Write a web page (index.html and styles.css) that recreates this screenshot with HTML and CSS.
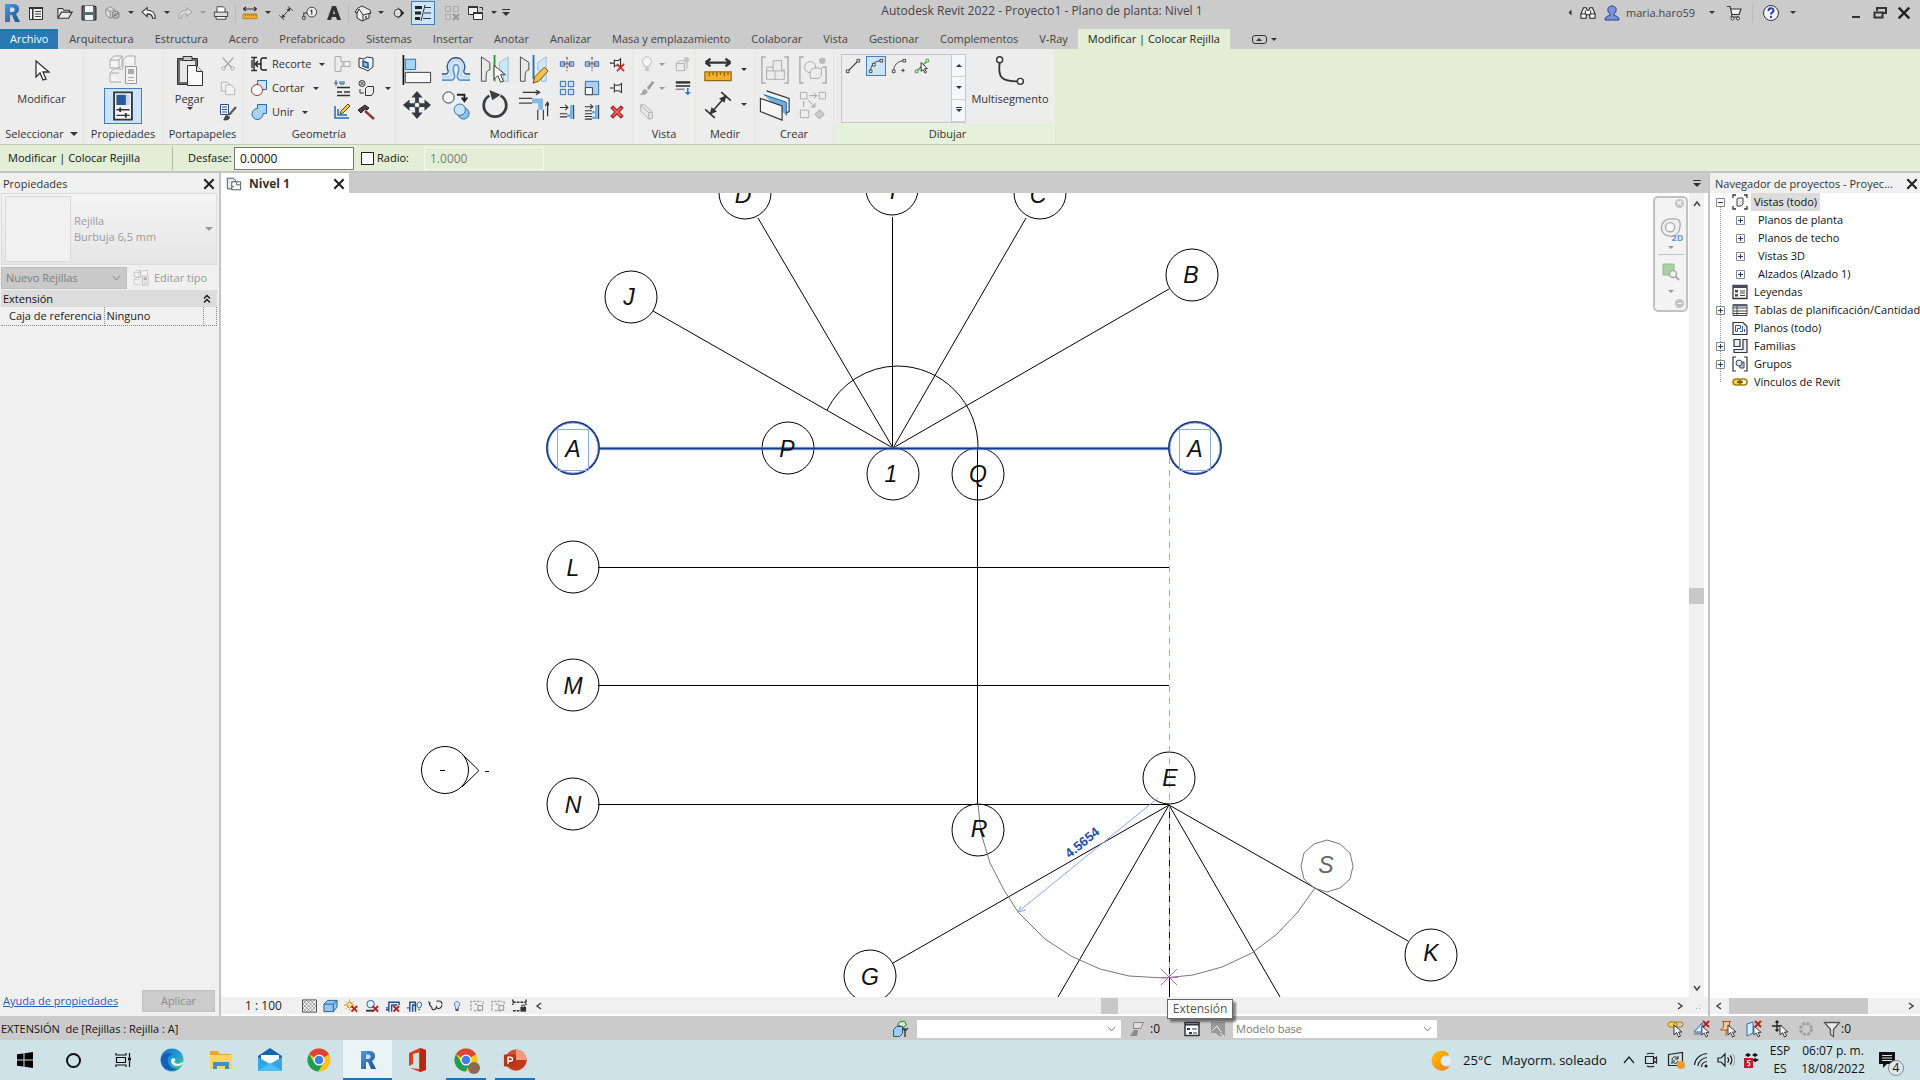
FILE: index.html
```html
<!DOCTYPE html>
<html lang="es">
<head>
<meta charset="utf-8">
<title>Autodesk Revit 2022 - Proyecto1</title>
<link rel="stylesheet" href="styles.css">
</head>
<body>
<svg class="sprite" aria-hidden="true">
  <defs>
    <linearGradient id="gBlue" x1="0" y1="0" x2="1" y2="1"><stop offset="0" stop-color="#4f9be0"/><stop offset="1" stop-color="#1c4f90"/></linearGradient>
    <linearGradient id="gEdge" x1="0" y1="0" x2="1" y2="1"><stop offset="0" stop-color="#1b6fc0"/><stop offset=".5" stop-color="#1f9bd8"/><stop offset="1" stop-color="#5fd06a"/></linearGradient>
    <linearGradient id="gSun" x1="0" y1="0" x2="1" y2="1"><stop offset="0" stop-color="#ffc400"/><stop offset="1" stop-color="#f07c10"/></linearGradient>
  </defs>
  <symbol id="revit" viewBox="0 0 20 20"><path d="M3 1h8c4 0 6 2 6 5 0 2-1 4-3 5l4 8h-5l-3-7H8v7H3z" fill="url(#gBlue)"/><path d="M8 4.500v4.500h2.500c3 0 3-4.500 0-4.500z" fill="#c9dff2"/></symbol>
  <symbol id="cursor" viewBox="0 0 16 22"><path d="M2 1v16l4-4 3 7 3-1-3-7h6z" fill="#fff" stroke="#333" stroke-width="1.300"/></symbol>
  <symbol id="palette" viewBox="0 0 16 16"><path d="M1.500 2.500h13v12h-13z" fill="#f4f4f4" stroke="#333"/><path d="M1 2h14v2H1zM4 4h1.500v10H4z" fill="#333"/><path d="M7 6.500h6M7 9h6M7 11.500h6" stroke="#444"/></symbol>
  <symbol id="open" viewBox="0 0 18 16"><path d="M1 14V3h5l2 2h6v3M1 14L5 7h12l-4 7z" fill="#e8e8e8" stroke="#333" stroke-width="1.200"/></symbol>
  <symbol id="save" viewBox="0 0 16 16"><path d="M1 1h13l1 1v13H1z" fill="#5a6672" stroke="#222"/><path d="M4 1h8v6H4zM4 10h8v5H4z" fill="#f1f3f5"/></symbol>
  <symbol id="sync" viewBox="0 0 18 16"><path d="M1 4l5-3 5 3v6l-5 4-5-4zM1 4l5 3 5-3M6 7v7" fill="#ddd" stroke="#888"/><circle cx="12" cy="10" r="4.500" fill="#8c8c8c"/><path d="M9.500 10a2.500 2.500 0 0 1 4-2M14.500 10a2.500 2.500 0 0 1-4 2" stroke="#eee" fill="none"/></symbol>
  <symbol id="undo" viewBox="0 0 18 16"><path d="M1 7l6-5v3c6 0 9 2 9 9h-3c0-4-2-5-6-5v3z" fill="#f4f4f4" stroke="#333" stroke-width="1.200"/></symbol>
  <symbol id="redo" viewBox="0 0 18 16"><path d="M17 7l-6-5v3c-6 0-9 2-9 9h3c0-4 2-5 6-5v3z" fill="#d8d8d8" stroke="#999"/></symbol>
  <symbol id="print" viewBox="0 0 18 16"><path d="M4.500 7V1h7l2 2v4" fill="#fff" stroke="#333"/><path d="M1.500 7h15v5h-15z" fill="#ddd" stroke="#333"/><path d="M3.500 12h11v3h-11z" fill="#fff" stroke="#333"/></symbol>
  <symbol id="measure" viewBox="0 0 24 22"><path d="M2 5h20M2 5l4-3M2 5l4 3M22 5l-4-3M22 5l-4 3" stroke="#333" stroke-width="1.800"/><path d="M1.500 12.500h21v7h-21z" fill="#f5b12e" stroke="#9a6a10"/><path d="M5 13v3M8 13v2M11 13v3M14 13v2M17 13v3M20 13v2" stroke="#8a5a00"/></symbol>
  <symbol id="dim" viewBox="0 0 26 28"><path d="M6 22L20 6M1 18l9 8M16 2l9 8" stroke="#333" stroke-width="1.500"/><path d="M5 23l2-7 5 4zM21 5l-7 3 5 4z" fill="#333"/></symbol>
  <symbol id="tag" viewBox="0 0 18 16"><circle cx="11" cy="7" r="5.500" fill="#eee" stroke="#333"/><path d="M6 8H2v4M11 4.500V10M11 4.500L9.500 6" fill="none" stroke="#333" stroke-width="1.200"/><path d="M.5 12h3v3h-3z" fill="#eee" stroke="#333"/></symbol>
  <symbol id="letterA" viewBox="0 0 16 16"><path d="M6 1h4l5 14h-4l-1-3H6l-1 3H1z" fill="#333"/><path d="M7 9h2L8 5z" fill="#ccc"/></symbol>
  <symbol id="house" viewBox="0 0 18 18"><path d="M1 8l3-4 4-2 8 4 1 3-2 .5V14l-7 3-5-3V9z" fill="#eee" stroke="#333"/><path d="M1 8l2 1 2-4 4 6 8-2M9 11v6" stroke="#333" fill="none"/><path d="M11 12l2-.6v4l-2 .8z" fill="#777"/></symbol>
  <symbol id="section" viewBox="0 0 16 18"><circle cx="7" cy="9" r="4.500" fill="#ddd" stroke="#333"/><path d="M6 2l8 7-8 7 2-3a5 5 0 0 0 0-8z" fill="#222"/></symbol>
  <symbol id="thin" viewBox="0 0 18 16"><path d="M1 2.500h7M1 8h6M1 13.500h5" stroke="#222" stroke-width="3"/><path d="M10.500 2.500H17M10 8h7M9 13.500h8M11 0L7 16" stroke="#333"/></symbol>
  <symbol id="closehid" viewBox="0 0 16 16"><path d="M1.500 1.500h5v5h-5zM9.500 1.500h5v5h-5zM1.500 9.500h5v5h-5z" fill="none" stroke="#aaa"/><path d="M9 9l6 6M15 9l-6 6" stroke="#999" stroke-width="2"/></symbol>
  <symbol id="switch" viewBox="0 0 18 18"><path d="M1.500 2.500h9v8h-9z" fill="#eee" stroke="#333"/><path d="M6.500 8.500h9v7h-9z" fill="#fff" stroke="#333"/><path d="M6 8h10v2H6zM1 2h10v2H1z" fill="#333"/><path d="M12.500 3.500h3v3" fill="none" stroke="#333"/></symbol>
  <symbol id="binoc" viewBox="0 0 18 16"><path d="M1 14V9l3-7h3l1 3h2l1-3h3l3 7v5h-6v-4H7v4z" fill="#f3f3f3" stroke="#222" stroke-width="1.200"/><path d="M1 9h6M11 9h6M6 5v5M12 5v5" stroke="#222"/></symbol>
  <symbol id="user" viewBox="0 0 16 16"><path d="M1 15c0-3 2-4 5-4.500V9C2 5 4 1 8 1s6 4 2 8v1.500c3 .5 5 1.500 5 4.500z" fill="#7c93dc" stroke="#2b3c7c"/></symbol>
  <symbol id="cart" viewBox="0 0 16 16"><path d="M1 1.500h3l2 8h7l2-5.500H5" fill="#f3f3f3" stroke="#333" stroke-width="1.200"/><path d="M6 9.500l-1 2.500h8" fill="none" stroke="#333"/><circle cx="6.500" cy="13.500" r="1.500" fill="#fff" stroke="#333"/><circle cx="12" cy="13.500" r="1.500" fill="#fff" stroke="#333"/></symbol>
  <symbol id="help" viewBox="0 0 18 18"><circle cx="9" cy="9" r="7.500" fill="#f4f6ff" stroke="#333"/><path d="M6.500 7c0-3.500 5-3.500 5-.5 0 2-2.500 1.800-2.500 4" fill="none" stroke="#2446b8" stroke-width="2"/><circle cx="9" cy="13" r="1.200" fill="#2446b8"/></symbol>
  <symbol id="restore" viewBox="0 0 14 14"><path d="M4 5V2h9v5h-3" fill="none" stroke="#333" stroke-width="2"/><path d="M1.500 6.500h8v5h-8z" fill="none" stroke="#333" stroke-width="2"/></symbol>
  <symbol id="x" viewBox="0 0 12 12"><path d="M2 2l8 8M10 2l-8 8" stroke="#222" stroke-width="1.800"/></symbol>
  <symbol id="types" viewBox="0 0 30 30"><path d="M2 5l4-4h8v9l-3 3H2zM2 5h9v8M11 5l3-4M15 5l4-4h8v9M15 5v8M2 18l4-4h9M2 18v9h11M2 18h9" fill="#f4f4f4" stroke="#aaa"/><path d="M17.500 11.500h11v17h-11z" fill="#f2f2f2" stroke="#999"/><path d="M20 14h6v5h-6zM20 22h6v1h-6zM20 25h6v1h-6z" fill="#aaa"/></symbol>
  <symbol id="props" viewBox="0 0 22 32"><path d="M1.500 1.500h19v29h-19z" fill="#f6f6f6" stroke="#2d3540" stroke-width="2"/><path d="M4 4h14v11H4z" fill="#c6d8ea"/><path d="M4 4h10v11H4z" fill="#2a5b98"/><path d="M4 20h14M4 26h14" stroke="#333" stroke-width="1.500"/><path d="M8 17.500v5M14 23.500v5" stroke="#333" stroke-width="2"/></symbol>
  <symbol id="clip" viewBox="0 0 28 32"><path d="M1.500 3.500h20v26h-20z" fill="#6b6b6b" stroke="#333"/><path d="M4 6h15v21H4z" fill="#e8e8e8"/><path d="M7 1.500h9v4H7z" fill="#ccc" stroke="#333"/><path d="M11.500 10.500h9l6 6v14h-15z" fill="#fafafa" stroke="#333"/><path d="M20.500 10.500v6h6" fill="#ddd" stroke="#333"/></symbol>
  <symbol id="cut" viewBox="0 0 18 18"><path d="M3 2l10 11M15 2L5 13" stroke="#aaa" stroke-width="1.500"/><circle cx="4" cy="14" r="2" fill="none" stroke="#aaa"/><circle cx="14" cy="14" r="2" fill="none" stroke="#aaa"/></symbol>
  <symbol id="copyg" viewBox="0 0 18 18"><path d="M1.500 2.500h7l2 2v8h-9z" fill="#f0f0f0" stroke="#b0b0b0"/><path d="M6.500 5.500h6l4 4v7h-10z" fill="#f3f3f3" stroke="#b0b0b0"/></symbol>
  <symbol id="match" viewBox="0 0 18 18"><path d="M1.500 1.500h8v10h-8z" fill="#f6fafe" stroke="#2a4f86"/><path d="M3 4h5M3 6.500h5M3 9h5" stroke="#2a4f86"/><path d="M17 4l-7 8" stroke="#555" stroke-width="2"/><path d="M4 17c2-1 1-5 4-5l3 2c0 3-4 4-7 3z" fill="#444"/></symbol>
  <symbol id="cope" viewBox="0 0 18 18"><path d="M1 2.500h6M1 15.500h6M4 2v13M2 5v8" stroke="#333" stroke-width="1.500"/><path d="M17 3h-4c-3 0-2 3-2 6s-1 6 2 6h4M5 9h6M8 6L5 9l3 3" fill="none" stroke="#222" stroke-width="1.500"/></symbol>
  <symbol id="cutg" viewBox="0 0 18 18"><path d="M7.500 1.500h9v9h-9z" fill="#cfe6f8" stroke="#2c6ca8"/><circle cx="7" cy="11" r="5.500" fill="#fff" stroke="#a33"/></symbol>
  <symbol id="join" viewBox="0 0 18 18"><path d="M7.500 1.500h9v9H13a5.500 5.500 0 1 1-5.500-5z" fill="#a8d3f2" stroke="#2c6ca8"/></symbol>
  <symbol id="wallj" viewBox="0 0 18 18"><path d="M2 1.500h6v5h2v5H8v5H2z" fill="#ececec" stroke="#aaa"/><path d="M11 6.500h6v5h-6z" fill="#f3f3f3" stroke="#aaa"/></symbol>
  <symbol id="split" viewBox="0 0 18 18"><path d="M4 8.500h13M4 13h5M11 13h6M4 16.500h13" stroke="#333" stroke-width="1.500"/><path d="M3 1v6M1 4h4M7 2v3h4V2M9 2v3" stroke="#2c5ca0" fill="none"/></symbol>
  <symbol id="paintw" viewBox="0 0 18 18"><path d="M2 3v12h14M5 6v6h9" fill="none" stroke="#1f6db0" stroke-width="1.500"/><path d="M7 11l1-3 7-7 2 2-7 7z" fill="#f3c24a" stroke="#6a4c10"/></symbol>
  <symbol id="face" viewBox="0 0 18 18"><path d="M2 3l5 1 3-2 6 1v9l-5 4-4-2-5-2z" fill="#f2f2f2" stroke="#333"/><path d="M6 6l5 2v5l-5-2z" fill="#8fc4ea" stroke="#205a90" stroke-width="1.500"/></symbol>
  <symbol id="demol" viewBox="0 0 18 18"><circle cx="5" cy="4.500" r="3" fill="#ddd" stroke="#444"/><path d="M3 2.500l4 4M7 2.500l-4 4" stroke="#444"/><path d="M8.500 9.500l2-2h6v6l-2 3h-6z" fill="#eee" stroke="#333"/><path d="M3 10v4h4" stroke="#333" fill="none"/></symbol>
  <symbol id="hammer" viewBox="0 0 18 18"><path d="M1 7l7-5 4 3-2 2-2-1-4 4z" fill="#444" stroke="#222"/><path d="M8 8l9 8" stroke="#8a3a2c" stroke-width="2.500"/></symbol>
  <symbol id="align" viewBox="0 0 32 32"><path d="M1.500 0v32" stroke="#111" stroke-width="1.800"/><path d="M3.500 4.500h11v11h-11z" fill="#a6d4f5" stroke="#2c6ca8"/><path d="M3.500 18.500h27v11h-27z" fill="#f7f7f7" stroke="#333"/></symbol>
  <symbol id="offset" viewBox="0 0 34 30"><path d="M1 26.500h11.500c6.500-3 0-9 1.500-14.500 1-4 5-4 6 0 1.500 5.500-5 11.500 1.500 14.500H33" fill="none" stroke="#5b9bd0" stroke-width="2"/><path d="M1 23h8c6-2 0-6 1-12 1-9 13-9 14 0 1 6-5 10 1 12h8" fill="none" stroke="#bcdcf4" stroke-width="3"/><path d="M1 19.500h5c5-2 0-5 1-9C9-2 25-2 27 10.500c1 4-4 7 1 9h5" fill="none" stroke="#2c5080" stroke-width="1.500"/></symbol>
  <symbol id="mirrorpick" viewBox="0 0 32 32"><path d="M1.500 2l9 6v8c-4 0-4 4-4 12h-5z" fill="#e8e8e8" stroke="#444"/><path d="M30 2l-9 6v8c4 0 4 4 4 12h5z" fill="#cfe8f8" stroke="#9bc"/><path d="M15.500 0v28" stroke="#2d9b37" stroke-width="2"/><path d="M15 11v15l4-4 3 7 3-1-3-7h5z" fill="#fff" stroke="#333"/></symbol>
  <symbol id="mirrordraw" viewBox="0 0 32 32"><path d="M1.500 2l9 6v8c-4 0-4 4-4 12h-5z" fill="#e8e8e8" stroke="#444"/><path d="M29 2l-9 6v8c4 0 4 4 4 12h5z" fill="#cfe8f8" stroke="#9bc"/><path d="M15.500 0v26" stroke="#2c6ec4" stroke-width="2"/><path d="M15 30l2-7 10-10 4 4-10 11z" fill="#f3c24a" stroke="#6b4c10"/></symbol>
  <symbol id="move" viewBox="0 0 32 32"><path d="M16 1l6 7h-4v5h-4V8h-4zM16 31l6-7h-4v-5h-4v5h-4zM1 16l7-6v4h5v4H8v4zM31 16l-7-6v4h-5v4h5v4z" fill="#333a44"/><path d="M13.500 13.500h5v5h-5z" fill="#fff" stroke="#333"/></symbol>
  <symbol id="copy" viewBox="0 0 32 32"><circle cx="8" cy="8" r="6" fill="#f6f6f6" stroke="#333"/><path d="M17 5h8v6M22 8l3 4 3-4" fill="none" stroke="#222" stroke-width="2"/><circle cx="24" cy="25" r="6" fill="#8ec4ea" stroke="#2c6ca8"/><circle cx="20" cy="21" r="6" fill="#c8e4f8" stroke="#2c6ca8"/></symbol>
  <symbol id="rotate" viewBox="0 0 32 32"><path d="M22 6A12 12 0 1 1 10 6" fill="none" stroke="#3a3f46" stroke-width="3"/><path d="M10 0l12 5-9 6z" fill="#3a3f46"/></symbol>
  <symbol id="trim" viewBox="0 0 32 32"><path d="M4 2.500h17M18 0l4 2.500L18 5M30.500 28V13M28 17l2.500-4 2 4" fill="none" stroke="#333" stroke-width="1.300"/><path d="M0 9h14M0 14h14M20 32V21M26 32V21" stroke="#444" stroke-width="1.300"/><path d="M14 11.500h9V21" fill="none" stroke="#7fbbe6" stroke-width="5"/></symbol>
  <symbol id="splitel" viewBox="0 0 18 18"><path d="M1.500 6.500h5v5h-5zM11.500 6.500h5v5h-5z" fill="#a8d3f2" stroke="#2560a0"/><path d="M9 1v16" stroke="#222" stroke-dasharray="3 2"/><path d="M4 9h10" stroke="#a33"/></symbol>
  <symbol id="unpin" viewBox="0 0 18 18"><path d="M1 8h5M6 4v9M6 5h5l2-2v10l-2-2H6" fill="none" stroke="#333" stroke-width="1.200"/><path d="M9 9l8 8M17 9l-8 8" stroke="#c5332a" stroke-width="2"/></symbol>
  <symbol id="pin" viewBox="0 0 18 18"><path d="M1 9h5M6 4v10M6 6h5l3-2v10l-3-2H6" fill="none" stroke="#333" stroke-width="1.200"/></symbol>
  <symbol id="array" viewBox="0 0 18 18"><path d="M1.500 1.500h6v6h-6zM10.500 1.500h6v6h-6zM1.500 10.500h6v6h-6zM10.500 10.500h6v6h-6z" fill="#cfe6f8" stroke="#2560a0"/></symbol>
  <symbol id="scale" viewBox="0 0 18 18"><path d="M1.500 1.500h15v15h-15z" fill="#a8d3f2" stroke="#2560a0"/><path d="M1.500 8.500h8v8h-8z" fill="#f7f7f7" stroke="#333"/></symbol>
  <symbol id="trim1" viewBox="0 0 18 18"><path d="M1 4h9M7 1l3 3-3 3M1 11h8M1 14.500h8M16.500 1v16" stroke="#333" fill="none" stroke-width="1.200"/><path d="M14 1v16M9 13h4" stroke="#6fb0e0" stroke-width="3"/></symbol>
  <symbol id="trim2" viewBox="0 0 18 18"><path d="M1 3h9M7 .5L10 3 7 5.500M1 7.500h8M1 11h8M1 14h8M1 17h8M16.500 1v16" stroke="#333" fill="none" stroke-width="1.200"/><path d="M14 1v16M9 9.300h4M9 15.500h4" stroke="#6fb0e0" stroke-width="3"/></symbol>
  <symbol id="redx" viewBox="0 0 18 18"><path d="M3 3l12 12M15 3L3 15" stroke="#a81f1f" stroke-width="4.500"/><path d="M4 4l10 10M14 4L4 14" stroke="#e8625c" stroke-width="2"/></symbol>
  <symbol id="bulb" viewBox="0 0 18 18"><path d="M6 12c0-3-2-3-2-6a5 5 0 0 1 10 0c0 3-2 3-2 6z" fill="#f4f4f4" stroke="#b5b5b5"/><path d="M7 13h4v4H7z" fill="#c4c4c4"/></symbol>
  <symbol id="boxg" viewBox="0 0 18 18"><path d="M1.500 8.500l3-3h9v8l-3 3h-9zM1.500 8.500h9v8M10.500 8.500l3-3" fill="#eee" stroke="#aaa"/><circle cx="13" cy="4" r="3" fill="#c4c4c4"/></symbol>
  <symbol id="brushg" viewBox="0 0 18 18"><path d="M16 2l-6 8" stroke="#999" stroke-width="3"/><path d="M1 16c3 0 2-6 6-6l3 3c-1 4-6 5-9 3z" fill="#aaa"/></symbol>
  <symbol id="linew" viewBox="0 0 20 18"><path d="M1 2h18" stroke="#333" stroke-width="3"/><path d="M1 6.500h18" stroke="#333" stroke-width="2"/><path d="M1 10.500h11" stroke="#333"/><path d="M15 9v5h-3l4 4 4-4h-3V9z" fill="#2c7cc8"/></symbol>
  <symbol id="wedge" viewBox="0 0 18 18"><path d="M2 1l3-1 10 9v7l-4 1-9-9zM2 1l9 9v7M11 10l4-1" fill="#e6e6e6" stroke="#aaa"/></symbol>
  <symbol id="group" viewBox="0 0 30 30"><path d="M5 1H1v28h4M25 1h4v28h-4" fill="none" stroke="#aaa" stroke-width="1.500"/><path d="M6 12h7V5h9v10h3v10H6zM6 16h9v9M13 12v4M15 16h10" fill="#ececec" stroke="#aaa"/></symbol>
  <symbol id="group2" viewBox="0 0 30 30"><path d="M5 1H1v28h4M25 12h4v17h-4" fill="none" stroke="#aaa" stroke-width="1.500"/><circle cx="12" cy="12" r="6" fill="#eee" stroke="#aaa"/><path d="M12 16l3-3h9v8l-3 3h-9z" fill="#ececec" stroke="#aaa"/><circle cx="25" cy="5" r="3.500" fill="#bbb"/></symbol>
  <symbol id="levels" viewBox="0 0 34 34"><path d="M8 2l24 8v14l-4 2" fill="#eaf4fb" stroke="#333" stroke-width="1.200"/><path d="M5 6l24 8v14" fill="#6fb0e0" stroke="#205a90"/><path d="M1.500 10l23 8v15l-23-9z" fill="#f5f5f5" stroke="#333" stroke-width="1.200"/></symbol>
  <symbol id="assembly" viewBox="0 0 30 30"><path d="M1.500 1.500h7v7h-7zM21.500 1.500h7v7h-7zM1.500 20.500h9v8h-9z" fill="#eee" stroke="#aaa"/><path d="M22 20l5 5-5 5-5-5z" fill="#ccc" stroke="#aaa"/><path d="M11 5h8M16 2l3 3-3 3M5 11v6M10 10l7 7M17 13v4h-4" fill="none" stroke="#999"/></symbol>
  <symbol id="dline" viewBox="0 0 18 18"><path d="M3 15L15 3" stroke="#333" stroke-width="1.200"/><path d="M1.500 13.500h3v3h-3zM13.500 1.500h3v3h-3z" fill="#fff" stroke="#333"/></symbol>
  <symbol id="darc" viewBox="0 0 18 18"><path d="M3 14C3 8 8 3 15 3" fill="none" stroke="#333"/><path d="M1.500 13.500h3v3h-3zM13.500 1.500h3v3h-3zM5 6h3v3H5z" fill="#fff" stroke="#333"/></symbol>
  <symbol id="darc2" viewBox="0 0 18 18"><path d="M3 14C3 8 8 3 15 3" fill="none" stroke="#333"/><path d="M1.500 13.500h3v3h-3zM13.500 1.500h3v3h-3z" fill="#fff" stroke="#333"/><path d="M13.500 12v4M11.500 14h4" stroke="#333"/></symbol>
  <symbol id="dpick" viewBox="0 0 18 18"><path d="M3 15L15 3" stroke="#3aa03a" stroke-width="1.500"/><path d="M1.500 13.500h3v3h-3zM13.500 1.500h3v3h-3z" fill="#dfd" stroke="#3aa03a"/><path d="M8 5v10l2.500-2 2 4 1.500-1-2-4h3z" fill="#fff" stroke="#222"/></symbol>
  <symbol id="multi" viewBox="0 0 32 34"><path d="M5 8c-2 16 2 20 19 20" fill="none" stroke="#333" stroke-width="2"/><circle cx="5" cy="5" r="3.200" fill="#fff" stroke="#333" stroke-width="1.500"/><circle cx="27" cy="28" r="3.200" fill="#fff" stroke="#333" stroke-width="1.500"/></symbol>
  <symbol id="plan" viewBox="0 0 18 16"><path d="M1.500 1.500h7l2 2v10h-9z" fill="#e4ecf4" stroke="#444"/><path d="M6.500 5.500h10v9h-10z" fill="#fff" stroke="#444"/><path d="M12 6v3h4M7 11h2" fill="none" stroke="#444"/></symbol>
  <symbol id="plus" viewBox="0 0 9 9"><path d="M.5.500h8v8h-8z" fill="#fff" stroke="#888"/><path d="M2 4.500h5M4.500 2v5" stroke="#223a7a"/></symbol>
  <symbol id="minus" viewBox="0 0 9 9"><path d="M.5.500h8v8h-8z" fill="#fff" stroke="#888"/><path d="M2 4.500h5" stroke="#223a7a"/></symbol>
  <symbol id="tviews" viewBox="0 0 16 16"><path d="M4 1H1v3M12 1h3v3M4 15H1v-3M12 15h3v-3" fill="none" stroke="#333" stroke-width="1.300"/><path d="M5 5l2-1h4v6l-2 2H5z" fill="#eee" stroke="#444"/></symbol>
  <symbol id="tleg" viewBox="0 0 16 16"><path d="M1 1.500h14v13H1z" fill="#fff" stroke="#333" stroke-width="1.300"/><path d="M1 1h14v3H1zM3 6h3v2.500H3zM3 10h3v2.500H3z" fill="#444b60"/><path d="M8 7h5M8 9h5M8 11.500h5" stroke="#444"/></symbol>
  <symbol id="ttab" viewBox="0 0 16 16"><path d="M1 2.500h14v11H1zM1 6h14M1 9h14M1 11.500h14M5 3v10" fill="#fff" stroke="#444"/><path d="M1 2h14v2.500H1z" fill="#555c70"/></symbol>
  <symbol id="tsheet" viewBox="0 0 16 16"><path d="M1 2.500h10l4 4v8H1z" fill="#fff" stroke="#334" stroke-width="1.200"/><path d="M3.500 5.500h5v3h-3v3h-2zM10.500 6v5.500H8M12.500 9v3" fill="none" stroke="#2c5ca0"/></symbol>
  <symbol id="tfam" viewBox="0 0 16 16"><path d="M2 1.500h6v7H2zM11 1.500h4v13H2v-3h9z" fill="#eee" stroke="#334" stroke-width="1.200"/></symbol>
  <symbol id="tgroup" viewBox="0 0 16 16"><path d="M4 1H1v14h3M12 1h3v14h-3" fill="none" stroke="#333" stroke-width="1.200"/><path d="M7 6h5v6H8z" fill="#b8c4d8" stroke="#445"/><circle cx="7" cy="7" r="3" fill="#dde6f0" stroke="#445"/></symbol>
  <symbol id="tlink" viewBox="0 0 16 10"><rect x="1" y="2" width="8" height="6" rx="3" fill="#f7d35a" stroke="#a67c00" stroke-width="1.500"/><rect x="7" y="2" width="8" height="6" rx="3" fill="none" stroke="#a67c00" stroke-width="1.500"/><path d="M5 5h6" stroke="#6b4e00" stroke-width="1.500"/></symbol>
  <symbol id="hatch" viewBox="0 0 16 14"><path d="M.5.500h15v13H.5z" fill="#fff" stroke="#444"/><path d="M1 5l4-4M1 9l8-8M1 13L13 1M5 13L15 3M9 13l6-6M1 9l4 4M1 5l8 8M1 1l12 12M5 1l10 10M9 1l6 6" stroke="#666" stroke-width=".7"/></symbol>
  <symbol id="vstyle" viewBox="0 0 16 14"><path d="M1 5l4-4h10v7l-4 5H1z" fill="#8fc8ee" stroke="#1f5c98"/><path d="M1 5h10v8M11 5l4-4" fill="none" stroke="#1f5c98"/></symbol>
  <symbol id="sunx" viewBox="0 0 16 14"><circle cx="6" cy="6" r="3" fill="#ffe28a" stroke="#c58a10"/><path d="M6 0v2M6 10v2M0 6h2M10 6h1M2 2l1 1M10 2L9 3M2 10l1-1" stroke="#c58a10"/><path d="M8 7l6 6M14 7l-6 6" stroke="#b82020" stroke-width="2"/></symbol>
  <symbol id="shadx" viewBox="0 0 16 14"><circle cx="6" cy="5" r="4" fill="#dff0fb" stroke="#2c5c98"/><path d="M1 12h8" stroke="#333" stroke-width="2"/><path d="M8 7l6 6M14 7l-6 6" stroke="#b82020" stroke-width="2"/></symbol>
  <symbol id="cropx" viewBox="0 0 16 14"><path d="M0 9h2M3 13V3h11v3M6 13V6h6M0 11h3" fill="none" stroke="#1f4f90" stroke-width="1.500"/><path d="M8 7l6 6M14 7l-6 6" stroke="#b82020" stroke-width="2"/></symbol>
  <symbol id="cropb" viewBox="0 0 16 14"><path d="M0 9h2M3 13V3h6v10M6 13V6h3" fill="none" stroke="#1f4f90" stroke-width="1.500"/><path d="M12 9c-3-4 0-7 2-6 3 1 1 5 0 6zM12 11h2" fill="#dff0fb" stroke="#1f4f90"/></symbol>
  <symbol id="glasses" viewBox="0 0 16 14"><path d="M1 2c0 3 1 5 3 6M1 4h2M9 2c3-1 6 0 6 3M4 8c0 4 4 4 5 0 1 3 5 2 6-2" fill="none" stroke="#333" stroke-width="1.200"/></symbol>
  <symbol id="sbulb" viewBox="0 0 16 14"><path d="M6 8C3 5 5 1 8 1s5 4 2 7v3H6z" fill="#cfe8fa" stroke="#2c62a8"/><path d="M6 12.500h4" stroke="#333" stroke-width="2"/></symbol>
  <symbol id="gbox" viewBox="0 0 16 14"><path d="M1 12V2h11M4 12h8M5 5h4M14 2v3" fill="none" stroke="#888" stroke-dasharray="3 1"/><path d="M8.500 6.500h5v5h-5z" fill="#eee" stroke="#888"/></symbol>
  <symbol id="constr" viewBox="0 0 16 14"><path d="M1 3h14M1 0v6M15 0v6M1 12h7" stroke="#333" stroke-width="1.500" fill="none" stroke-dasharray="3 1"/><path d="M9 8h6v5H9z" fill="#333"/><path d="M10.500 8V6h3v2" fill="none" stroke="#333"/></symbol>
  <symbol id="worksets" viewBox="0 0 18 18"><path d="M1.500 9.500l3-3h6v7l-3 3h-6z" fill="#9ccdf0" stroke="#205a90"/><path d="M5.500 5l2-3 5-1 2 4-3 2z" fill="#d6f0cf" stroke="#2d7d2d"/><path d="M13 8v9M11 8l2 3 3-3" stroke="#444" fill="none" stroke-width="1.500"/></symbol>
  <symbol id="editreq" viewBox="0 0 18 18"><path d="M5.500 2.500h10l-3 6h-7z" fill="#ddd" stroke="#888"/><path d="M2 16h7l1-6H6z" fill="#8a8a8a"/></symbol>
  <symbol id="dopt" viewBox="0 0 16 16"><path d="M1 1.500h14v13H1z" fill="#fff" stroke="#334" stroke-width="1.500"/><path d="M1 3.500h14" stroke="#334" stroke-width="2"/><path d="M3 7h3v2H3zM5 11h3v2H5z" fill="#334"/><path d="M8 8h5M9 12h4" stroke="#334"/></symbol>
  <symbol id="dopt2" viewBox="0 0 16 16"><path d="M1 1h14v14H9l-3-3H1z" fill="#999"/><path d="M2 10l5-5 4 6M10 12l4 3" fill="none" stroke="#eee"/></symbol>
  <symbol id="pk" viewBox="0 0 10 14"><path d="M1 1v10l2.500-2.500L5.500 13l2-1-2-4H9z" fill="#fff" stroke="#333"/></symbol>
  <symbol id="selLink" viewBox="0 0 18 18"><rect x="1" y="2" width="9" height="5" rx="2.500" fill="#f7d35a" stroke="#b07c00"/><rect x="7" y="2" width="9" height="5" rx="2.500" fill="none" stroke="#b07c00"/><use href="#pk" x="6" y="4" width="10" height="14"/></symbol>
  <symbol id="selUnder" viewBox="0 0 18 18"><path d="M1 12L9 3v9zM1 14h9" fill="#d8ecfa" stroke="#2c6ca8"/><path d="M10 1l6 6M16 1l-6 6" stroke="#b82020" stroke-width="2"/><use href="#pk" x="8" y="5" width="9" height="13"/></symbol>
  <symbol id="selPin" viewBox="0 0 18 18"><path d="M3 1.500h9M4.500 2v5l-3 3h12l-3-3V2M7 10v6" fill="#f7c8a0" stroke="#b05a20"/><use href="#pk" x="8" y="4" width="10" height="14"/></symbol>
  <symbol id="selFace" viewBox="0 0 18 18"><path d="M2 4l6-2v11l-6 3z" fill="#d8ecfa" stroke="#2c6ca8"/><path d="M10 1l6 6M16 1l-6 6" stroke="#b82020" stroke-width="2"/><use href="#pk" x="8" y="5" width="9" height="13"/></symbol>
  <symbol id="selDrag" viewBox="0 0 18 18"><path d="M6 1v10M1 6h10M4.500 2.500L6 1l1.500 1.500M4.500 9.500L6 11l1.500-1.500" fill="none" stroke="#222" stroke-width="1.300"/><use href="#pk" x="8" y="4" width="10" height="14"/></symbol>
  <symbol id="ring" viewBox="0 0 18 18"><circle cx="9" cy="9" r="5.500" fill="none" stroke="#a0a0a0" stroke-width="3" stroke-dasharray="3 1.300"/></symbol>
  <symbol id="funnel" viewBox="0 0 18 18"><path d="M1.500 2.500h15l-6 7v7l-3-2v-5z" fill="#eaeaea" stroke="#555" stroke-width="1.300"/></symbol>
  <symbol id="win" viewBox="0 0 16 16"><path d="M0 2.300L6.500 1.400v6.100H0zM7.500 1.200L16 0v7.500H7.500zM0 8.500h6.500v6.100L0 13.700zM7.500 8.500H16V16l-8.500-1.200z" fill="#000"/></symbol>
  <symbol id="taskv" viewBox="0 0 16 16"><path d="M1 1v2h10V1M1 15v-2h10v2M1.500 5.500h9v5h-9z" fill="none" stroke="#111" stroke-width="1.200"/><path d="M14.500 1v4M14.500 9v6" stroke="#111" stroke-width="1.200"/><path d="M13 5.500h3v3h-3z" fill="#111"/></symbol>
  <symbol id="edge" viewBox="0 0 24 24"><circle cx="12" cy="12" r="11.500" fill="url(#gEdge)"/><path d="M1 11c1-6 8-8 13-4-5-1-7 3-6 7 1 5 6 8 11 6-6 5-18 3-18-9z" fill="#155fb5"/><path d="M13 10c3 0 3 3 1 4 2 3 8 2 9-1 .5 4-3 5-6 5-6 0-8-7-4-8z" fill="#e8f6fa"/></symbol>
  <symbol id="folder" viewBox="0 0 24 22"><path d="M1 2h8l2 3h11v15H1z" fill="#e8a92c"/><path d="M1 6h22v14H1z" fill="#fbd468"/><path d="M4 20v-7h16v7h-4v-3H8v3z" fill="#3f8fd0"/></symbol>
  <symbol id="mail" viewBox="0 0 24 24"><path d="M12 0l12 8v14H0V8z" fill="#1167b1"/><path d="M3 7h18v9H3z" fill="#fff"/><path d="M0 9l12 7 12-7v14H0z" fill="#33a6ea"/><path d="M0 23l12-8 12 8z" fill="#50bdf5"/></symbol>
  <symbol id="chrome" viewBox="0 0 24 24"><circle cx="12" cy="12" r="11.500" fill="#f9c322"/><path d="M12 12L2 6.200A11.500 11.500 0 0 1 22 6.200z" fill="#dd4436"/><path d="M22 6.200H12l-2 5z" fill="#dd4436"/><path d="M2 6.200L7 14l5-2 4.500 2.500L11.500 23.500A11.500 11.500 0 0 1 2 6.200z" fill="#1f9d55"/><circle cx="12" cy="12" r="5.500" fill="#fff"/><circle cx="12" cy="12" r="4.300" fill="#3f7ee8"/></symbol>
  <symbol id="office" viewBox="0 0 22 24"><path d="M3 5l11-5 6 2v20l-6 2-10-4 9 1V4.500L7 6v10l-4 2z" fill="#dc3f1c"/><path d="M14 0l6 2v20l-6 2z" fill="#b82a10"/></symbol>
  <symbol id="ppt" viewBox="0 0 26 24"><circle cx="14" cy="12" r="11.500" fill="#d9502f"/><path d="M14 .5A11.500 11.500 0 0 1 25.500 12H14z" fill="#f59a7c"/><path d="M25.500 12A11.500 11.500 0 0 1 3 15l11-3z" fill="#c23c1c"/><rect x="1" y="6" width="13" height="13" rx="1" fill="#b5341a"/><path d="M5.500 16V9h2.500c3 0 3 4.200 0 4.200H5.500" fill="none" stroke="#fff" stroke-width="1.600"/></symbol>
  <symbol id="moon" viewBox="0 0 22 22"><path d="M18 4a10 10 0 1 0 2 13c-6 2-11-2-9-7 1-4 5-4 8-3z" fill="url(#gSun)"/><path d="M11 11a6 6 0 0 1 9-2c2 2 1 6-2 7-4 1-7-1-7-5z" fill="#e4eef4"/></symbol>
  <symbol id="cam" viewBox="0 0 16 16"><path d="M2.500 4.500h8v7h-8zM10.500 7l3-2v6l-3-2M4 2c1-1 6-1 7 0M4 14c1 1 6 1 7 0" fill="none" stroke="#222" stroke-width="1.200"/></symbol>
  <symbol id="onesync" viewBox="0 0 18 18"><path d="M1.500 3.500l14-2v13h-14z" fill="none" stroke="#222" stroke-width="1.200"/><path d="M5 9c0-4 5-4 6-1M11 5v3H8M11 10c-1 3-4 3-5 1M5 13v-3h3" fill="none" stroke="#222"/><circle cx="14" cy="14" r="4" fill="#f59a23"/></symbol>
  <symbol id="wifi" viewBox="0 0 16 16"><path d="M1.500 13C2 7 7 2 14 1.500M5 14c0-4 4-8 9-8.500M8.500 15c0-3 2-5 5.500-5.500" fill="none" stroke="#222" stroke-width="1.200"/><circle cx="13" cy="14" r="1.500" fill="#222"/></symbol>
  <symbol id="vol" viewBox="0 0 18 16"><path d="M1 6h3l4-4v12l-4-4H1zM10.500 5.500c1.500 1.500 1.500 3.500 0 5M13 3.500c2.500 2.500 2.500 6.500 0 9" fill="none" stroke="#222" stroke-width="1.200"/><path d="M15.500 2c3 3 3 9 0 12" fill="none" stroke="#999"/></symbol>
  <symbol id="dropb" viewBox="0 0 18 18"><path d="M5 2l3 2-3 2-3-2zM12 2l3 2-3 2-3-2zM12 7l4 2-4 2-3-2z" fill="#111"/><path d="M1 7h9v10H1z" fill="#c81a2c"/><path d="M7.500 9.500h-3v2c3-.5 3 3.500 0 3" fill="none" stroke="#fff" stroke-width="1.200"/></symbol>
  <symbol id="notif" viewBox="0 0 18 18"><path d="M1 1h16v12H9l-4 4v-4H1z" fill="#111"/><path d="M4 4.500h10M4 7h10M4 9.500h10" stroke="#d4e4ea"/></symbol>
  <symbol id="wheel" viewBox="0 0 24 24"><path d="M11 1h6c4 0 5 2 5 6 0 9-5 13-11 13A9.500 9.500 0 0 1 11 1z" fill="#efefef" stroke="#aaa" stroke-width="1.500"/><circle cx="11" cy="10" r="5" fill="#f8f8f8" stroke="#aaa" stroke-width="1.500"/></symbol>
  <symbol id="zoomr" viewBox="0 0 18 18"><path d="M1 1h11v11H1z" fill="#a9d3a3" stroke="#8dbb87"/><circle cx="11" cy="11" r="3.500" fill="#f4f4f4" stroke="#aaa" stroke-width="1.500"/><path d="M13.500 13.500l3.500 3.500" stroke="#aaa" stroke-width="2"/></symbol>
</svg>

<div class="app">
  <header class="titlebar">
    <div class="qat">
      <button class="ib" aria-label="Inicio"><svg class="i20"><use href="#revit"/></svg></button>
      <button class="ib" aria-label="Ventana"><svg class="i16"><use href="#palette"/></svg></button>
      <span class="gap"></span>
      <button class="ib" aria-label="Abrir"><svg class="i16"><use href="#open"/></svg></button>
      <button class="ib" aria-label="Guardar"><svg class="i16"><use href="#save"/></svg></button>
      <button class="ib" aria-label="Sincronizar"><svg class="i16"><use href="#sync"/></svg></button>
      <button class="dd" aria-label="Opciones de sincronizar"></button>
      <button class="ib" aria-label="Deshacer"><svg class="i16"><use href="#undo"/></svg></button>
      <button class="dd" aria-label="Lista deshacer"></button>
      <button class="ib" aria-label="Rehacer"><svg class="i16"><use href="#redo"/></svg></button>
      <button class="dd off" aria-label="Lista rehacer"></button>
      <button class="ib" aria-label="Imprimir"><svg class="i16"><use href="#print"/></svg></button>
      <span class="sep"></span>
      <button class="ib" aria-label="Medir"><svg class="i16"><use href="#measure"/></svg></button>
      <button class="dd" aria-label="Opciones de medir"></button>
      <button class="ib" aria-label="Cota"><svg class="i16"><use href="#dim"/></svg></button>
      <button class="ib" aria-label="Etiqueta"><svg class="i16"><use href="#tag"/></svg></button>
      <button class="ib" aria-label="Texto"><svg class="i16"><use href="#letterA"/></svg></button>
      <span class="sep"></span>
      <button class="ib" aria-label="Vista 3D"><svg class="i18"><use href="#house"/></svg></button>
      <button class="dd" aria-label="Opciones 3D"></button>
      <button class="ib" aria-label="Sección"><svg class="i16"><use href="#section"/></svg></button>
      <button class="ib on" aria-label="Líneas finas"><svg class="i18"><use href="#thin"/></svg></button>
      <span class="gap"></span>
      <button class="ib" aria-label="Cerrar ocultas"><svg class="i16"><use href="#closehid"/></svg></button>
      <button class="ib" aria-label="Cambiar ventanas"><svg class="i18"><use href="#switch"/></svg></button>
      <button class="dd" aria-label="Lista de ventanas"></button>
      <button class="dd over" aria-label="Personalizar"></button>
    </div>
    <h1 class="title">Autodesk Revit 2022 - Proyecto1 - Plano de planta: Nivel 1</h1>
    <div class="account">
      <button class="dd left" aria-label="Contraer"></button>
      <button class="ib" aria-label="Buscar"><svg class="i16"><use href="#binoc"/></svg></button>
      <button class="ib" aria-label="Usuario"><svg class="i16"><use href="#user"/></svg></button>
      <span class="uname">maria.haro59</span>
      <button class="dd" aria-label="Cuenta"></button>
      <button class="ib wide" aria-label="Tienda"><svg class="i16"><use href="#cart"/></svg></button>
      <span class="sep"></span>
      <button class="ib wide" aria-label="Ayuda"><svg class="i18"><use href="#help"/></svg></button>
      <button class="dd" aria-label="Opciones de ayuda"></button>
    </div>
    <div class="winbtns">
      <button class="ib" aria-label="Minimizar"><i class="mini"></i></button>
      <button class="ib" aria-label="Restaurar"><svg class="i14"><use href="#restore"/></svg></button>
      <button class="ib" aria-label="Cerrar"><svg class="i16"><use href="#x"/></svg></button>
    </div>
  </header>

  <nav class="tabs">
    <a class="tab file" href="#archivo">Archivo</a>
    <a class="tab" href="#t">Arquitectura</a>
    <a class="tab" href="#t">Estructura</a>
    <a class="tab" href="#t">Acero</a>
    <a class="tab" href="#t">Prefabricado</a>
    <a class="tab" href="#t">Sistemas</a>
    <a class="tab" href="#t">Insertar</a>
    <a class="tab" href="#t">Anotar</a>
    <a class="tab" href="#t">Analizar</a>
    <a class="tab" href="#t">Masa y emplazamiento</a>
    <a class="tab" href="#t">Colaborar</a>
    <a class="tab" href="#t">Vista</a>
    <a class="tab" href="#t">Gestionar</a>
    <a class="tab" href="#t">Complementos</a>
    <a class="tab" href="#t">V-Ray</a>
    <a class="tab current" href="#t">Modificar | Colocar Rejilla</a>
    <button class="collapse" aria-label="Minimizar cinta"><i class="pill"><i class="tri up"></i></i><i class="tri"></i></button>
  </nav>

  <section class="ribbon">
    <div class="grp g-sel">
      <div class="gbody"><button class="big"><svg class="icur"><use href="#cursor"/></svg><span>Modificar</span></button></div>
      <div class="glabel">Seleccionar <i class="tri lg"></i></div>
    </div>
    <div class="grp g-prop">
      <div class="gbody stack"><button class="ib32" aria-label="Propiedades de tipo"><svg class="i30"><use href="#types"/></svg></button><button class="ib32 on" aria-label="Propiedades"><svg class="iprops"><use href="#props"/></svg></button></div>
      <div class="glabel">Propiedades</div>
    </div>
    <div class="grp g-clip">
      <div class="gbody cols"><button class="big paste"><svg class="i32"><use href="#clip"/></svg><span>Pegar</span><i class="tri"></i></button>
        <div class="small1"><button class="ib" aria-label="Cortar"><svg class="i16"><use href="#cut"/></svg></button><button class="ib" aria-label="Copiar"><svg class="i16"><use href="#copyg"/></svg></button><button class="ib" aria-label="Igualar"><svg class="i18"><use href="#match"/></svg></button></div></div>
      <div class="glabel">Portapapeles</div>
    </div>
    <div class="grp g-geo">
      <div class="gbody geo">
        <button class="lb"><svg class="i18"><use href="#cope"/></svg><span>Recorte</span><i class="tri"></i></button><button class="ib" aria-label="Unir cubierta"><svg class="i18"><use href="#wallj"/></svg></button><button class="lb" aria-label="Dividir cara"><svg class="i18"><use href="#face"/></svg></button>
        <button class="lb"><svg class="i18"><use href="#cutg"/></svg><span>Cortar</span><i class="tri"></i></button><button class="ib" aria-label="Uniones"><svg class="i18"><use href="#split"/></svg></button><button class="lb" aria-label="Pintar"><svg class="i18"><use href="#demol"/></svg><i class="tri"></i></button>
        <button class="lb"><svg class="i18"><use href="#join"/></svg><span>Unir</span><i class="tri"></i></button><button class="ib" aria-label="Uniones de muro"><svg class="i18"><use href="#paintw"/></svg></button><button class="lb" aria-label="Derribar"><svg class="i18"><use href="#hammer"/></svg></button>
      </div>
      <div class="glabel">Geometría</div>
    </div>
    <div class="grp g-mod">
      <div class="gbody cols">
        <div class="grid4">
          <button aria-label="Alinear"><svg class="i30"><use href="#align"/></svg></button><button aria-label="Desfase"><svg class="i30"><use href="#offset"/></svg></button><button aria-label="Simetría eje"><svg class="i30"><use href="#mirrorpick"/></svg></button><button aria-label="Simetría dibujar"><svg class="i30"><use href="#mirrordraw"/></svg></button>
          <button aria-label="Mover"><svg class="i30"><use href="#move"/></svg></button><button aria-label="Copiar"><svg class="i30"><use href="#copy"/></svg></button><button aria-label="Rotar"><svg class="i30"><use href="#rotate"/></svg></button><button aria-label="Recortar"><svg class="i30"><use href="#trim"/></svg></button>
        </div>
        <div class="grid3">
          <button aria-label="Dividir"><svg class="i16"><use href="#splitel"/></svg></button><button aria-label="Dividir con hueco"><svg class="i16"><use href="#splitel"/></svg></button><button aria-label="Desbloquear"><svg class="i16"><use href="#unpin"/></svg></button>
          <button aria-label="Matriz"><svg class="i16"><use href="#array"/></svg></button><button aria-label="Escala"><svg class="i16"><use href="#scale"/></svg></button><button aria-label="Bloquear"><svg class="i16"><use href="#pin"/></svg></button>
          <button aria-label="Recortar uno"><svg class="i16"><use href="#trim1"/></svg></button><button aria-label="Recortar varios"><svg class="i16"><use href="#trim2"/></svg></button><button aria-label="Suprimir"><svg class="i16"><use href="#redx"/></svg></button>
        </div>
      </div>
      <div class="glabel">Modificar</div>
    </div>
    <div class="grp g-vis">
      <div class="gbody vis">
        <button aria-label="Ocultar"><svg class="i16"><use href="#bulb"/></svg></button><i class="tri off"></i><button aria-label="Caja"><svg class="i16"><use href="#boxg"/></svg></button>
        <button aria-label="Modificar gráficos"><svg class="i16"><use href="#brushg"/></svg></button><i class="tri off"></i><button aria-label="Estilo de línea"><svg class="i16"><use href="#linew"/></svg></button>
        <button aria-label="Desplazar"><svg class="i16"><use href="#wedge"/></svg></button>
      </div>
      <div class="glabel">Vista</div>
    </div>
    <div class="grp g-med">
      <div class="gbody med"><button aria-label="Medir"><svg class="i30"><use href="#measure"/></svg></button><i class="tri"></i><button aria-label="Cota"><svg class="i30"><use href="#dim"/></svg></button><i class="tri"></i></div>
      <div class="glabel">Medir</div>
    </div>
    <div class="grp g-cre">
      <div class="gbody cre"><button aria-label="Grupo"><svg class="i28"><use href="#group"/></svg></button><button aria-label="Similar"><svg class="i28"><use href="#group2"/></svg></button><button aria-label="Piezas"><svg class="i32"><use href="#levels"/></svg></button><button aria-label="Montaje"><svg class="i28"><use href="#assembly"/></svg></button></div>
      <div class="glabel">Crear</div>
    </div>
    <div class="grp g-dib">
      <div class="gbody cols">
        <div class="gallery"><div class="items"><button aria-label="Línea"><svg class="i16"><use href="#dline"/></svg></button><button class="on" aria-label="Arco"><svg class="i16"><use href="#darc"/></svg></button><button aria-label="Arco centro"><svg class="i16"><use href="#darc2"/></svg></button><button aria-label="Seleccionar líneas"><svg class="i16"><use href="#dpick"/></svg></button></div>
          <div class="steps"><button aria-label="Subir"><i class="tri up"></i></button><button aria-label="Bajar"><i class="tri"></i></button><button aria-label="Más"><i class="tri bar"></i></button></div></div>
        <button class="big multi"><svg class="i32"><use href="#multi"/></svg><span>Multisegmento</span></button>
      </div>
      <div class="glabel">Dibujar</div>
    </div>
  </section>

  <form class="options">
    <span class="ctx">Modificar | Colocar Rejilla</span>
    <label for="desf">Desfase:</label><input id="desf" type="text" value="0.0000">
    <input id="rad" type="checkbox"><label for="rad" class="lrad">Radio:</label>
    <input type="text" class="dis" aria-label="Valor de radio" value="1.0000" disabled>
  </form>

  <main class="work">
    <aside class="props">
      <div class="phead"><h2>Propiedades</h2><button aria-label="Cerrar propiedades"><svg class="i14"><use href="#x"/></svg></button></div>
      <button class="typesel" disabled><span class="thumb"></span><span class="tname">Rejilla<br>Burbuja 6,5 mm</span><i class="tri off lg"></i></button>
      <div class="prow"><select aria-label="Filtro" disabled><option>Nuevo Rejillas</option></select><button class="edit" disabled><svg class="i16"><use href="#types"/></svg>Editar tipo</button></div>
      <table class="ptable">
        <colgroup><col class="ck"><col><col class="cb"></colgroup>
        <thead><tr><th colspan="3"><span class="sec">Extensión<svg class="chev" viewBox="0 0 8 10"><path d="M1 4.500l3-3 3 3M1 8.500l3-3 3 3" fill="none" stroke="#111" stroke-width="1.300"/></svg></span></th></tr></thead>
        <tbody><tr><td class="k">Caja de referencia</td><td class="v">Ninguno</td><td></td></tr></tbody>
      </table>
      <div class="pfoot"><a href="#ayuda">Ayuda de propiedades</a><button disabled>Aplicar</button></div>
    </aside>

    <section class="view">
      <div class="vtabs"><div class="vtab"><svg class="i16"><use href="#plan"/></svg><strong>Nivel 1</strong><button aria-label="Cerrar vista"><svg class="i14"><use href="#x"/></svg></button></div><button class="dd over end" aria-label="Lista de vistas"></button></div>
      <div class="vrow">
        <div class="canvas">
          <svg class="drawing" viewBox="221 193 1468 804" preserveAspectRatio="xMinYMin slice">
            <g class="ln">
              <path d="M893 448L653 311M893 448L758 218M892.500 448V217M893 448L1026 218M893 448L1169 289"/>
              <path d="M827 410A80 80 0 0 1 897 366A81 81 0 0 1 978 448M977.500 448V804"/>
              <path d="M598 567.500H1169M598 685.500H1169M598 804.500H1169"/>
              <path d="M1169 805L893 963M1169 805L1058 997M1169.500 805V997M1169 805L1280 997M1169 805L1408 941"/>
              <circle cx="745" cy="193" r="26"/><circle cx="892" cy="189" r="26"/><circle cx="1040" cy="193" r="26"/>
              <circle cx="631" cy="297" r="26"/><circle cx="1192" cy="275" r="26"/><circle cx="788" cy="448" r="26"/>
              <circle cx="893" cy="474" r="26"/><circle cx="978" cy="474" r="26"/>
              <circle cx="573" cy="567" r="26"/><circle cx="573" cy="685" r="26"/><circle cx="573" cy="804" r="26"/>
              <circle cx="1169" cy="778" r="26"/><circle cx="978" cy="830" r="26"/><circle cx="870" cy="976" r="26"/><circle cx="1431" cy="955" r="26"/>
              <circle cx="445" cy="770" r="23.500"/><path d="M463 755L479 770.500L462 787"/>
              <path d="M440 770.500h5M485 771.500h4"/>
            </g>
            <path class="selhalo" d="M598 448.500H1170"/>
            <path class="sel" d="M598 448.500H1170"/>
            <g class="selc"><circle cx="573" cy="448" r="26"/><circle cx="1195" cy="448" r="26"/></g>
            <g class="selb"><circle cx="573" cy="448" r="25"/><circle cx="1195" cy="448" r="25"/><path d="M557.500 429.500h31v41h-31zM1179.500 429.500h31v41h-31z"/></g>
            <g class="gray"><path d="M978 804L981 833 990 863 1004 890 1018 912 1045 939 1071 956 1100 969 1129 976 1164 978 1193 975 1222 967 1252 953 1277 934 1297 913 1315 888"/><path d="M1327 840l13 4 10 9 3 13-3 13-10 9-13 4-13-4-10-9-3-13 3-13 10-9z"/></g>
            <path class="ext" d="M1169.500 458V976"/>
            <path class="dimn" d="M1158 798L1018 912M1018 912l3-6M1018 912l8-2"/>
            <path class="snap" d="M1161 969l16 16M1177 969l-16 16M1161 977.500h17"/>
            <g class="lt">
              <text x="743" y="203">D</text><text x="893" y="199">I</text><text x="1038" y="203">C</text><text x="629" y="305">J</text><text x="1191" y="283">B</text>
              <text x="573" y="457">A</text><text x="1195" y="457">A</text><text x="787" y="457">P</text><text x="891" y="482">1</text><text x="978" y="482">Q</text>
              <text x="573" y="576">L</text><text x="573" y="694">M</text><text x="573" y="813">N</text><text x="1170" y="786">E</text><text x="979" y="837">R</text><text x="870" y="985">G</text><text x="1431" y="961">K</text><text class="g" x="1326" y="873">S</text>
            </g>
            <text class="dtext" transform="translate(1085 846) rotate(-39)">4.5654</text>
          </svg>
          <div class="navbar"><i class="dot">×</i><svg class="i24"><use href="#wheel"/></svg><span class="d2">2D</span><i class="tri off"></i><hr><svg class="i18"><use href="#zoomr"/></svg><i class="tri off"></i><i class="dot low">–</i></div>
        </div>
        <div class="vscroll"><svg class="arr" viewBox="0 0 8 6"><path d="M1 5l3-4 3 4" /></svg><i class="vthumb"></i><svg class="arr" viewBox="0 0 8 6"><path d="M1 1l3 4 3-4"/></svg></div>
        <div class="tip">Extensión</div>
      </div>
      <div class="vbar">
        <button class="scale">1 : 100</button>
        <button aria-label="Detalle"><svg class="i15"><use href="#hatch"/></svg></button><button aria-label="Estilo"><svg class="i15"><use href="#vstyle"/></svg></button><button aria-label="Sol"><svg class="i15"><use href="#sunx"/></svg></button><button aria-label="Sombras"><svg class="i15"><use href="#shadx"/></svg></button><button aria-label="Recorte"><svg class="i15"><use href="#cropx"/></svg></button><button aria-label="Región"><svg class="i15"><use href="#cropb"/></svg></button><button aria-label="Aislar"><svg class="i15"><use href="#glasses"/></svg></button><button aria-label="Revelar"><svg class="i12"><use href="#sbulb"/></svg></button><button aria-label="Propiedades temporales"><svg class="i15"><use href="#gbox"/></svg></button><button aria-label="Analítico"><svg class="i15"><use href="#gbox"/></svg></button><button aria-label="Restricciones"><svg class="i15"><use href="#constr"/></svg></button>
        <svg class="arr first" viewBox="0 0 6 8"><path d="M5 1L1 4l4 3"/></svg><span class="htrack"><i class="hthumb"></i></span><svg class="arr" viewBox="0 0 6 8"><path d="M1 1l4 3-4 3"/></svg><i class="grip"></i>
      </div>
    </section>

    <aside class="browser">
      <div class="phead"><h2>Navegador de proyectos - Proyec...</h2><button aria-label="Cerrar navegador"><svg class="i14"><use href="#x"/></svg></button></div>
      <ul class="tree">
        <li><svg class="ex"><use href="#minus"/></svg><svg class="i16"><use href="#tviews"/></svg><span class="hot">Vistas (todo)</span></li>
        <li class="sub"><svg class="ex"><use href="#plus"/></svg><span>Planos de planta</span></li>
        <li class="sub"><svg class="ex"><use href="#plus"/></svg><span>Planos de techo</span></li>
        <li class="sub"><svg class="ex"><use href="#plus"/></svg><span>Vistas 3D</span></li>
        <li class="sub"><svg class="ex"><use href="#plus"/></svg><span>Alzados (Alzado 1)</span></li>
        <li><i class="ex"></i><svg class="i16"><use href="#tleg"/></svg><span>Leyendas</span></li>
        <li><svg class="ex"><use href="#plus"/></svg><svg class="i16"><use href="#ttab"/></svg><span>Tablas de planificación/Cantidades</span></li>
        <li><i class="ex"></i><svg class="i16"><use href="#tsheet"/></svg><span>Planos (todo)</span></li>
        <li><svg class="ex"><use href="#plus"/></svg><svg class="i16"><use href="#tfam"/></svg><span>Familias</span></li>
        <li><svg class="ex"><use href="#plus"/></svg><svg class="i16"><use href="#tgroup"/></svg><span>Grupos</span></li>
        <li><i class="ex"></i><svg class="i16"><use href="#tlink"/></svg><span>Vínculos de Revit</span></li>
      </ul>
      <div class="bscroll"><svg class="arr" viewBox="0 0 6 8"><path d="M5 1L1 4l4 3"/></svg><span class="btrack"><i></i></span><svg class="arr" viewBox="0 0 6 8"><path d="M1 1l4 3-4 3"/></svg></div>
    </aside>
  </main>

  <footer class="status">
    <span class="msg">EXTENSIÓN&nbsp; de [Rejillas : Rejilla : A]</span>
    <div class="smid">
      <svg class="i18"><use href="#worksets"/></svg>
      <select aria-label="Subproyecto"><option></option></select>
      <svg class="i18"><use href="#editreq"/></svg><span class="cnt">:0</span>
      <svg class="i16"><use href="#dopt"/></svg><svg class="i16"><use href="#dopt2"/></svg>
      <select aria-label="Opción de diseño"><option>Modelo base</option></select>
    </div>
    <div class="sright"><svg class="i18"><use href="#selLink"/></svg><svg class="i18"><use href="#selUnder"/></svg><svg class="i18"><use href="#selPin"/></svg><svg class="i18"><use href="#selFace"/></svg><svg class="i18"><use href="#selDrag"/></svg><svg class="i18"><use href="#ring"/></svg><svg class="i18"><use href="#funnel"/></svg><span>:0</span></div>
  </footer>

  <div class="taskbar">
    <div class="apps">
      <button aria-label="Inicio de Windows"><svg class="i16"><use href="#win"/></svg></button>
      <button aria-label="Cortana"><i class="cort"></i></button>
      <button aria-label="Vista de tareas"><svg class="i16"><use href="#taskv"/></svg></button>
      <button aria-label="Edge"><svg class="i24"><use href="#edge"/></svg></button>
      <button aria-label="Explorador"><svg class="i24"><use href="#folder"/></svg></button>
      <button aria-label="Correo"><svg class="i24"><use href="#mail"/></svg></button>
      <button aria-label="Chrome"><svg class="i24"><use href="#chrome"/></svg></button>
      <button class="act" aria-label="Revit"><svg class="i20"><use href="#revit"/></svg></button>
      <button aria-label="Office"><svg class="i24"><use href="#office"/></svg></button>
      <button class="run" aria-label="Chrome abierto"><svg class="i24"><use href="#chrome"/></svg><i class="avatar"></i></button>
      <button class="run" aria-label="PowerPoint"><svg class="i24"><use href="#ppt"/></svg></button>
    </div>
    <div class="tray">
      <svg class="i22"><use href="#moon"/></svg><span class="weather">25°C&nbsp;&nbsp; Mayorm. soleado</span>
      <div class="tics"><svg class="i12" viewBox="0 0 12 12"><path d="M1 9l5-6 5 6" fill="none" stroke="#222" stroke-width="1.300"/></svg><svg class="i16"><use href="#cam"/></svg><svg class="i18"><use href="#onesync"/></svg><svg class="i16"><use href="#wifi"/></svg><svg class="i18"><use href="#vol"/></svg><svg class="i18"><use href="#dropb"/></svg></div>
      <span class="two lang">ESP<br>ES</span><span class="two clock">06:07 p. m.<br>18/08/2022</span>
      <button class="ntf" aria-label="Notificaciones"><svg class="i18"><use href="#notif"/></svg><b>4</b></button>
    </div>
  </div>
</div>
</body>
</html>
```

FILE: styles.css
```css
* { box-sizing: border-box; }
body { margin: 0; font: 11px/16px "Open Sans", "Noto Sans", sans-serif; color: #222; background: #cbcbcb; }
button, input, select { font: inherit; color: inherit; margin: 0; }
button { border: 0; background: none; padding: 0; display: flex; align-items: center; justify-content: center; }
h1, h2 { margin: 0; font-size: 11px; font-weight: 400; }
a { color: inherit; text-decoration: none; }
svg { display: block; flex: none; }
.sprite { position: absolute; width: 0; height: 0; }
.i12 { width: 12px; height: 12px; }
.i14 { width: 14px; height: 14px; }
.i15 { width: 15px; height: 14px; }
.i16 { width: 16px; height: 16px; }
.i18 { width: 18px; height: 18px; }
.i20 { width: 20px; height: 20px; }
.i22 { width: 22px; height: 22px; }
.i24 { width: 24px; height: 24px; }
.i28 { width: 28px; height: 28px; }
.i30 { width: 30px; height: 30px; }
.i32 { width: 32px; height: 32px; }
.app { display: flex; flex-direction: column; height: 100vh; overflow: hidden; }

.tri, .dd::after { content: ""; display: block; flex: none; width: 0; height: 0; border: 3px solid transparent; border-top-color: #333; border-bottom: 0; }
.tri.lg { border-width: 4px; border-bottom: 0; }
.tri.off, .dd.off::after { border-top-color: #999; }
.tri.up { border-width: 0 3px 3px; border-style: solid; border-color: transparent transparent #333; }
.tri.bar { position: relative; }
.tri.bar::before { content: ""; position: absolute; left: -3px; top: -5px; width: 6px; height: 1px; background: #333; }

.titlebar { display: flex; flex: 0 0 29px; padding-bottom: 4px; background: #cbcbcb; align-items: center; }
.qat { display: flex; align-items: center; flex: 0 0 520px; }
.ib { width: 24px; height: 24px; flex: none; }
.ib.wide { width: 32px; }
.ib.on, .items .on { background: #cde4f8; border: 1px solid #3f7fbf; }
.gap { width: 5px; }
.dd { width: 12px; height: 24px; flex: none; }
.dd.left::after { transform: rotate(90deg); }
.dd.over::after { border-width: 4px; border-bottom: 0; }
.dd.over { flex-direction: column; gap: 2px; }
.dd.over::before { content: ""; width: 8px; height: 1px; background: #333; }
.sep { width: 1px; height: 20px; background: #bbb; margin: 0 2px; }
.title { flex: 1; text-align: center; color: #444; padding-bottom: 4px; font-size: 12px; }
.account { display: flex; align-items: center; flex: 0 0 280px; color: #444; }
.uname { width: 82px; padding-left: 2px; }
.winbtns { display: flex; flex: 0 0 76px; }
.mini { width: 8px; height: 2px; background: #333; margin-top: 8px; }

.tabs { display: flex; flex: 0 0 20px; background: #cbcbcb; color: #444; }
.tab { padding: 2px 10px 2px 11px; white-space: nowrap; }
.tab.file { background: #2879b2; color: #fff; padding: 2px 10px; }
.tab.current { background: #e3eed6; color: #222; padding: 2px 10px; }
.collapse { margin-left: 22px; gap: 4px; }
.pill { display: flex; align-items: center; justify-content: center; width: 15px; height: 9px; border: 1px solid #333; border-radius: 3px; }

.ribbon { display: flex; flex: 0 0 95px; background: #e3eed6; color: #333; }
.grp { display: flex; flex-direction: column; flex: none; background: #ededed; border-right: 1px solid #e4eadd; }
.gbody { flex: 0 0 75px; padding-top: 3px; }
.glabel { flex: 1; display: flex; align-items: center; justify-content: center; gap: 6px; line-height: 20px; white-space: nowrap; }
.g-sel { width: 84px; }
.g-prop { width: 79px; }
.g-clip { width: 80px; }
.g-geo { width: 153px; }
.g-mod { width: 237px; }
.g-vis { width: 63px; }
.g-med { width: 59px; }
.g-cre { width: 79px; }
.g-dib { width: 222px; }
.g-dib .glabel { background: #e6f0da; padding-left: 6px; }
.big { flex-direction: column; justify-content: flex-start; width: 100%; height: 72px; padding-top: 3px; }
.icur { width: 16px; height: 22px; margin: 5px 0 9px; }
.big .i32 { margin-bottom: 4px; }
.stack { display: flex; flex-direction: column; align-items: center; }
.ib32 { width: 38px; height: 36px; }
.ib32.on { background: #cde4f8; border: 1px solid #3f7fbf; }
.iprops { width: 22px; height: 30px; }
.cols { display: flex; }
.paste { width: 53px; }
.small1, .geo, .grid3, .vis { display: grid; grid-template-rows: repeat(3, 24px); }
.geo { grid-template-columns: 80px 24px 38px; padding-left: 7px; }
.lb { justify-content: flex-start; gap: 4px; }
.geo .lb { height: 24px; }
.geo .lb:nth-child(3n) { gap: 6px; padding-left: 3px; }
.geo .tri { margin-left: 4px; }
.grid4 { display: grid; grid-template: repeat(2, 35px) / repeat(4, 39px); padding-left: 1px; }
.grid3 { grid-template-columns: repeat(3, 25px); padding-left: 1px; }
.vis { grid-template-columns: 24px 12px 24px; align-items: center; padding-left: 2px; }
.med { display: grid; grid-template: repeat(2, 35px) / 38px 16px; padding-left: 3px; align-items: center; }
.med .tri { margin-left: 4px; }
.cre { display: grid; grid-template: repeat(2, 35px) / repeat(2, 38px); padding-left: 1px; }
.g-dib .gbody { padding-left: 7px; }
.gallery { display: flex; width: 125px; height: 69px; margin-top: 2px; border: 1px solid #c3c8cc; }
.items { flex: 1; display: flex; gap: 3px; align-items: flex-start; padding: 1px; }
.items button { width: 20px; height: 20px; border: 1px solid transparent; }
.steps { width: 14px; display: flex; flex-direction: column; border-left: 1px solid #c3c8cc; background: #f7f7f7; }
.steps button { flex: 1; border-bottom: 1px solid #d0d4d8; }
.multi { width: 86px; margin-left: 1px; }

.options { display: flex; align-items: center; flex: 0 0 29px; background: #e3eed6; border-top: 1px solid #c2cbb8; border-bottom: 2px solid #c4c4c4; color: #111; }
.ctx { width: 173px; padding-left: 8px; line-height: 24px; border-right: 1px solid #b0b8a6; margin-right: 15px; }
.options input[type=text] { width: 120px; height: 23px; border: 1px solid #777; background: #fff; padding: 0 5px; font-size: 12px; }
.options label { width: 46px; white-space: nowrap; }
.options .lrad { width: 47px; }
.options input[type=checkbox] { appearance: none; width: 13px; height: 13px; border: 1px solid #222; background: #fff; margin: 0 3px 0 7px; }
.options input.dis { background: none; border-color: #f2f7ec; color: #7b8375; }

.work { display: flex; flex: 1; min-height: 0; }
.phead { display: flex; align-items: center; justify-content: space-between; flex: 0 0 20px; padding: 1px 3px 0; background: #f0f0f0; color: #333; }
.phead h2 { white-space: nowrap; }
.props { display: flex; flex-direction: column; flex: 0 0 219px; background: #f0f0f0; }
.typesel { flex: 0 0 72px; margin: 0 2px 1px 1px; padding: 0 3px; border: 1px solid #dcdcdc; background: linear-gradient(#f4f4f4, #e6e6e6); justify-content: flex-start; gap: 3px; text-align: left; color: #9c9c9c; }
.thumb { width: 66px; height: 66px; border: 1px solid #dadada; background: #f1f1f1; }
.tname { flex: 1; }
select { appearance: none; border: 0; border-radius: 0; opacity: 1; background: #fff url("data:image/svg+xml,%3Csvg xmlns='http://www.w3.org/2000/svg' width='9' height='6'%3E%3Cpath d='M1 1l3.500 4L8 1' fill='none' stroke='%23888'/%3E%3C/svg%3E") no-repeat right 5px center; }
.prow { display: flex; align-items: center; flex: 0 0 23px; color: #999; }
.prow select { width: 126px; height: 22px; margin-left: 1px; padding: 0 4px; background-color: #c9c9c9; color: #7d7d7d; border: 1px solid #bebebe; }
.edit { gap: 5px; margin-left: 6px; color: #999; }
.ptable { border-collapse: collapse; width: 216px; margin: 1px 0 0 1px; table-layout: fixed; }
.ck { width: 103px; }
.cb { width: 13px; }
.ptable th { height: 17px; padding: 0 2px; background: #dcdcdc; font-weight: 400; text-align: left; color: #111; }
.sec { display: flex; align-items: center; justify-content: space-between; }
.chev { width: 8px; height: 10px; margin-right: 4px; }
.ptable td { padding: 0; height: 18px; white-space: nowrap; border-bottom: 1px dotted #888; border-right: 1px dotted #888; }
.ptable .k { padding-left: 8px; }
.ptable .v { padding-left: 2px; }
.pfoot { display: flex; align-items: center; justify-content: space-between; margin-top: auto; padding: 0 4px 4px 3px; }
.pfoot a { color: #1f62b5; text-decoration: underline; }
.pfoot button { width: 73px; height: 22px; background: #ccc; border: 1px solid #c0c0c0; color: #8b8b8b; }

.view { display: flex; flex-direction: column; flex: 1; min-width: 0; border: solid #c4c4c4; border-width: 0 2px; background: #fff; }
.vtabs { display: flex; flex: 0 0 20px; background: #cbcbcb; justify-content: space-between; align-items: stretch; }
.vtab { display: flex; align-items: center; width: 128px; padding: 1px 3px 0 5px; background: #fff; color: #333; gap: 7px; font-size: 12px; }
.vtab button { margin-left: auto; }
.end { width: 22px; height: 20px; }
.vrow { position: relative; display: flex; flex: 1; min-height: 0; }
.canvas { position: relative; flex: 1; min-width: 0; overflow: hidden; }
.drawing { width: 100%; height: 100%; }
.ln { fill: none; stroke: #000; }
.sel { stroke: #123a8c; stroke-width: 2; }
.selhalo { stroke: #9db9e4; stroke-width: 4; opacity: .5; }
.selc { fill: none; stroke: #16367c; stroke-width: 2; }
.selb { fill: none; stroke: #8ea9e2; }
.gray { fill: none; stroke: #777; }
.ext { stroke: #7fb9e0; stroke-dasharray: 6 6; }
.dimn { fill: none; stroke: #8aa9ea; }
.snap { stroke: #b06ab0; }
.lt text { font: italic 23px "Liberation Sans", Arial, sans-serif; text-anchor: middle; fill: #111; }
.lt .g { fill: #666; }
.dtext { font: bold 13px "Liberation Sans", Arial, sans-serif; text-anchor: middle; fill: #1b4fa8; }
.navbar { position: absolute; top: 3px; right: 1px; width: 35px; height: 116px; border: 2px solid #c2c2c2; border-radius: 5px; background: #f3f3f3; display: flex; flex-direction: column; align-items: center; padding-top: 1px; }
.dot { align-self: flex-end; width: 9px; height: 9px; margin-right: 2px; border-radius: 50%; background: #c4c4c4; color: #fff; font: bold 9px/9px "Liberation Sans", sans-serif; text-align: center; }
.navbar .i24 { margin-top: 9px; width: 22px; }
.d2 { margin: -8px 0 4px 14px; font-size: 9px; line-height: 9px; color: #6b9bd0; font-weight: 700; }
.navbar hr { width: 26px; margin: 5px 0 8px; border: 0; border-top: 1px solid #c4c4c4; }
.navbar .i18 + .tri { margin-top: 9px; }
.low { margin-top: auto; margin-bottom: 2px; }
.tip { position: absolute; z-index: 1; left: 63.6%; bottom: -22px; padding: 0 5px; border: 1px solid #666; background: #fff; color: #555; line-height: 18px; font-size: 12px; box-shadow: 3px 3px 2px rgba(0, 0, 0, .45); }
.vscroll { width: 15px; margin-right: 4px; background: #f0f0f0; display: flex; flex-direction: column; justify-content: space-between; align-items: center; padding: 7px 0 5px; }
.vthumb { width: 15px; height: 16px; background: #c8c8c8; }
.arr { width: 8px; height: 8px; fill: none; stroke: #444; stroke-width: 1.500px; }
.arr.first { margin-left: 5px; }
.vbar { display: flex; align-items: center; flex: 0 0 17px; margin-bottom: 2px; padding-top: 1px; background: #f0f0f0; }
.vbar button { width: 21px; height: 16px; }
.vbar .scale { width: 77px; margin-right: 1px; padding-left: 8px; font-size: 12px; }
.htrack { flex: 1; height: 16px; padding-left: 37.5%; }
.hthumb { display: block; width: 17px; height: 16px; background: #c8c8c8; }
.grip { width: 10px; height: 10px; margin: 0 6px 0 8px; background: radial-gradient(circle, #aaa 1px, transparent 1px) 0 0 / 3px 3px; clip-path: polygon(100% 0, 100% 100%, 0 100%); }

.browser { display: flex; flex-direction: column; flex: 0 0 210px; min-width: 0; background: #fff; overflow: hidden; }
.browser .phead { padding: 1px 1px 0 5px; }
.tree { list-style: none; margin: 0; padding: 0 0 0 6px; flex: 1; color: #111; background: repeating-linear-gradient(#999 0 1px, transparent 1px 2px) 10px 14px / 1px 176px no-repeat; }
.tree li { display: flex; align-items: center; height: 18px; gap: 7px; white-space: nowrap; }
.ex { width: 9px; height: 9px; flex: none; }
.tree .i16 + span { margin-left: -4px; }
.tree .sub { padding-left: 20px; gap: 14px; }
.tree span { line-height: 18px; padding: 0 3px; }
.tree .sub span { margin-left: -4px; }
.tree .hot { background: #dcdcdc; }
.bscroll { display: flex; align-items: center; flex: 0 0 16px; margin-bottom: 2px; padding: 0 5px; background: #f0f0f0; }
.btrack { flex: 1; padding: 0 39px 0 6px; }
.btrack i { display: block; height: 16px; background: #c8c8c8; }

.status { display: flex; align-items: center; flex: 0 0 24px; padding-top: 1px; background: #cbcbcb; color: #111; }
.msg { flex: 0 0 892px; padding-left: 1px; }
.smid { display: flex; align-items: center; flex: 1; }
.smid select { width: 204px; height: 18px; color: #777; padding: 0 3px; margin-left: 7px; }
.smid select + svg { margin-left: 7px; }
.cnt { width: 12px; margin: 0 22px 0 4px; font-size: 12px; }
.smid .i16 + .i16 { margin-left: 10px; }
.sright { display: flex; align-items: center; gap: 8px; flex: 0 0 253px; font-size: 12px; }
.sright span { margin-left: -8px; }

.taskbar { display: flex; justify-content: space-between; flex: 0 0 40px; background: #cee2e8; color: #111; font-size: 12px; }
.apps { display: flex; }
.apps button { position: relative; width: 49px; height: 40px; }
.apps .act { background: #eaf4f7; box-shadow: inset 0 -2px #1a74c4; }
.apps .run { background: linear-gradient(#1a74c4, #1a74c4) center bottom / 40px 2px no-repeat; }
.cort { width: 15px; height: 15px; border: 2px solid #111; border-radius: 50%; }
.avatar { position: absolute; right: 10px; bottom: 6px; width: 12px; height: 12px; border-radius: 50%; background: #8a6a52; }
.tray { display: flex; align-items: center; flex: 0 0 490px; }
.weather { font-size: 13px; margin-left: 11px; width: 160px; white-space: nowrap; }
.tics { display: flex; align-items: center; gap: 8px; }
.two { flex: none; line-height: 18px; text-align: center; white-space: nowrap; }
.lang { margin-left: 8px; width: 22px; }
.clock { margin-left: 8px; width: 68px; }
.ntf { position: relative; flex: none; margin-left: 11px; height: 40px; }
.ntf b { position: absolute; right: -8px; bottom: 4px; width: 16px; height: 16px; border: 1px solid #888; border-radius: 50%; background: #dde8ec; font-weight: 400; line-height: 14px; }
```
